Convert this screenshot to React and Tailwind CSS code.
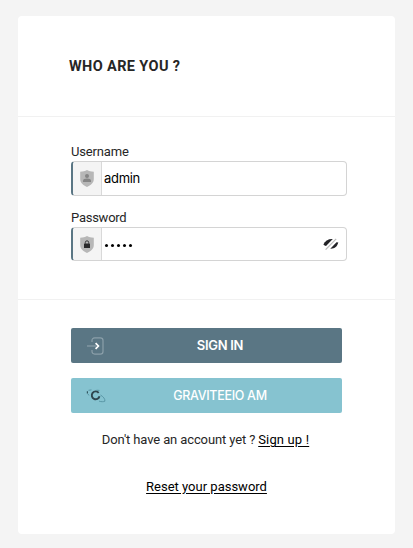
import React from "react";

const Shield = ({ children }) => (
  <svg width="14" height="17" viewBox="0 0 14 17" className="block">
    <path d="M0.2 1.700C3 1.600 5 1.100 7 0c2 1.100 4 1.600 6.800 1.700v7.500c0 3.700-3 6-6.800 7.800C3.200 15.200.2 12.900.2 9.200z" fill="#b7b7b7" />
    {children}
  </svg>
);

const UserShield = () => (
  <Shield>
    <circle cx="7" cy="5.900" r="2" fill="#858585" />
    <path d="M3 12V10.700c0-1.400 1.700-2.100 4-2.100s4 .7 4 2.100V12z" fill="#858585" />
  </Shield>
);

const LockShield = () => (
  <Shield>
    <rect x="4" y="7.500" width="6" height="4.500" rx="0.600" fill="#29292b" />
    <path d="M5.300 7.700V6.500a1.700 1.700 0 0 1 3.400 0v1.200" fill="none" stroke="#29292b" strokeWidth="0.900" />
  </Shield>
);

const HiddenEye = () => (
  <svg width="16" height="12" viewBox="0 0 16 12" className="block">
    <path d="M0.400 6.600C2 2.700 5.500.7 9.800 1L3 8C2 7.900 1.200 7.400.4 6.600z" fill="#222226" />
    <path d="M13.500 4.300l1.800.2C14.300 8.500 11.600 10.900 7.300 10.700z" fill="#222226" />
    <path d="M2.600 11.600L13.200 0.800" stroke="#bcbcbc" strokeWidth="1.200" />
  </svg>
);

const SignInIcon = () => (
  <svg width="18" height="18" viewBox="0 0 18 18" fill="none" className="block">
    <path d="M5 5V3.500C5 1.800 6 .9 7.700.9h5.600c1.700 0 2.700.9 2.700 2.600v11c0 1.700-1 2.600-2.700 2.600H7.700C6 17.100 5 16.200 5 14.500V13" stroke="#8b9fa9" strokeWidth="1.200" />
    <path d="M0 9h9" stroke="#8b9fa9" strokeWidth="1.200" />
    <path d="M8.600 6.200L11.400 9l-2.800 2.800" stroke="#fff" strokeWidth="1.700" />
  </svg>
);

const GraviteeIcon = () => (
  <svg width="20" height="14" viewBox="0 0 20 14" fill="none" className="block">
    <path d="M2.500 1.300L5.500.9M2 5l1 1.500M10.500 1.200l3 .2M14.500 6c2.800 1.700 4.700 3.900 4.400 6.200-1.500.7-3.600.7-5.900-.1" stroke="#4e8c9a" strokeWidth="0.800" />
    <path d="M1.400 2.300v2.200" stroke="#315761" strokeWidth="1.200" />
    <path d="M12.700 3.800A3.900 3.900 0 1 0 13.500 7.200" stroke="#2f454e" strokeWidth="1.900" />
  </svg>
);

function Field({ label, icon, height, spacing, children }) {
  return (
    <label className="block w-[276px]">
      <span className={`block h-[18px] whitespace-nowrap font-['Roboto',sans-serif] text-[13px] leading-[18px] text-[#262626] ${spacing}`}>{label}</span>
      <span className={`flex overflow-hidden rounded border border-l-2 border-[#d4d4d4] border-l-[#5a7684] bg-white ${height}`}>
        <span className="flex w-[29px] items-center justify-center border-r border-[#d9d9d9] bg-[#f4f4f4]">{icon}</span>
        {children}
      </span>
    </label>
  );
}

export default function App() {
  return (
    <div className="h-[548px] w-[413px] bg-[#f4f4f4] px-[18px] pt-4">
      <main className="h-[518px] w-[377px] rounded-[4px] bg-white">
        <header className="h-[101px] border-b border-[#f1f1f1] pt-[41px] pl-[51px]">
          <h1 className="whitespace-nowrap font-['Roboto',sans-serif] text-[14.5px] leading-5 font-bold tracking-[0.380px] text-[#262626]">WHO ARE YOU ?</h1>
        </header>
        <section className="flex h-[183px] flex-col gap-[13px] border-b border-[#f1f1f1] pt-[26px] pl-[53px]">
          <Field label="Username" height="h-[35px]" spacing="tracking-[-0.150px]" icon={<UserShield />}>
            <span className="flex flex-1 items-center pl-[2px] font-['Inter',sans-serif] text-[13px] tracking-[-0.300px] text-black">admin</span>
          </Field>
          <Field label="Password" height="h-[34px]" spacing="tracking-[-0.250px]" icon={<LockShield />}>
            <span className="flex flex-1 items-center justify-between pr-[7px] pl-[3px]">
              <span className="flex gap-[3px] pt-[3px]">
                {[0, 1, 2, 3, 4].map((i) => (
                  <i key={i} className="size-[3px] rounded-full bg-black" />
                ))}
              </span>
              <HiddenEye />
            </span>
          </Field>
        </section>
        <section className="pt-7">
          <div className="ml-[53px] flex w-[271px] flex-col gap-[15px] font-['Inter',sans-serif] text-[13px] text-white">
            <button className="flex h-[35px] items-center rounded-[2px] bg-[#5a7684] pl-4 font-semibold">
              <span className="w-[19px]"><SignInIcon /></span>
              <span className="flex-1 pr-[8px] text-center tracking-[-0.300px]">SIGN IN</span>
            </button>
            <button className="flex h-[35px] items-center rounded-[2px] bg-[#86c3d0] pl-[15px] font-medium">
              <span className="w-5"><GraviteeIcon /></span>
              <span className="flex-1 pt-[2px] pr-[8px] text-center text-[12.5px] tracking-[-0.300px]">GRAVITEEIO AM</span>
            </button>
          </div>
          <p className="mt-[17px] flex justify-center gap-[3px] pr-[2px] font-['Roboto',sans-serif] text-[13px] leading-5 whitespace-nowrap text-[#262626]">
            <span className="tracking-[-0.120px]">Don't have an account yet ?</span>
            <a href="#" className="tracking-[0.150px] text-black underline underline-offset-2">Sign up !</a>
          </p>
          <p className="mt-[27px] text-center font-['Roboto',sans-serif] text-[13px] leading-5 text-black">
            <a href="#" className="underline underline-offset-2">Reset your password</a>
          </p>
        </section>
      </main>
    </div>
  );
}
